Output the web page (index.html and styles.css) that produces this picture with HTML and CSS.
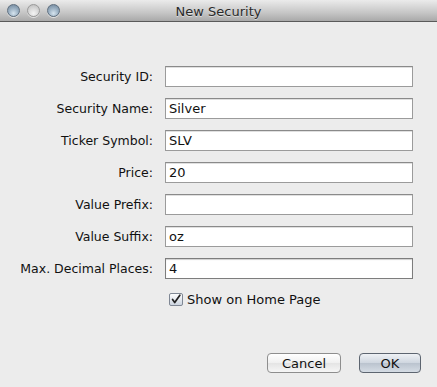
FILE: index.html
```html
<!DOCTYPE html>
<html lang="en">
<head>
    <meta charset="UTF-8">
    <title>New Security</title>
    <link rel="stylesheet" href="styles.css">
</head>
<body>

<div class="window">
    <div class="titlebar">
        <div class="lights">
            <span class="light"></span>
            <span class="light off"></span>
            <span class="light"></span>
        </div>
        <div class="title">New Security</div>
    </div>

    <div class="content">
        <div class="form">
            <label class="label">Security ID:</label>
            <div class="field"></div>
            <label class="label">Security Name:</label>
            <div class="field">Silver</div>
            <label class="label">Ticker Symbol:</label>
            <div class="field">SLV</div>
            <label class="label">Price:</label>
            <div class="field">20</div>
            <label class="label">Value Prefix:</label>
            <div class="field"></div>
            <label class="label">Value Suffix:</label>
            <div class="field">oz</div>
            <label class="label">Max. Decimal Places:</label>
            <div class="field focus">4</div>
        </div>

        <div class="check-row">
            <span class="checkbox">
                <svg width="14" height="13" viewBox="0 0 14 13">
                    <path d="M3 6.5 L5.5 10 L11.5 1.5" fill="none" stroke="#222" stroke-width="2" stroke-linecap="round" stroke-linejoin="round"/>
                </svg>
            </span>
            <span>Show on Home Page</span>
        </div>

        <div class="buttons">
            <button class="btn">Cancel</button>
            <button class="btn default">OK</button>
        </div>
    </div>
</div>

</body>
</html>
```

FILE: styles.css
```css
body {
    margin: 0;
    background-color: #ececec;
    font-family: "DejaVu Sans", "Liberation Sans", sans-serif;
    font-size: 12.5px;
    color: #111;
}

.window {
    width: 437px;
    height: 387px;
    display: flex;
    flex-direction: column;
    background-color: #ececec;
}

.titlebar {
    height: 21px;
    position: relative;
    background: linear-gradient(#ebebeb, #c6c6c6 60%, #a9a9a9);
    border-bottom: 1px solid #5a5a5a;
    display: flex;
    align-items: center;
    justify-content: center;
}

.lights {
    position: absolute;
    left: 7px;
    top: 4px;
    display: flex;
    gap: 7px;
}

.light {
    width: 13px;
    height: 13px;
    border-radius: 50%;
    box-sizing: border-box;
    border: 1px solid #5f6f7f;
    background: radial-gradient(circle at 50% 75%, #d6e4ee 0%, #9fb4c6 45%, #6c8298 100%);
    box-shadow: 0 1px 0 rgba(255, 255, 255, 0.6);
}

.light.off {
    border-color: #9a9a9a;
    background: radial-gradient(circle at 50% 75%, #f4f4f4 0%, #d8d8d8 50%, #b8b8b8 100%);
}

.title {
    font-size: 13px;
    color: #2a2a2a;
    padding-top: 1px;
    text-shadow: 0 1px 0 rgba(255, 255, 255, 0.5);
}

.content {
    flex: 1;
    display: flex;
    flex-direction: column;
}

.form {
    display: grid;
    grid-template-columns: 153px 248px;
    column-gap: 12px;
    row-gap: 11px;
    margin-top: 44px;
    align-items: center;
}

.label {
    text-align: right;
}

.field {
    height: 21px;
    box-sizing: border-box;
    border: 1px solid #9b9b9b;
    border-top-color: #8a8a8a;
    background-color: #fff;
    box-shadow: inset 0 1px 0 #e0e0e0;
    padding: 2px 3px 0;
    line-height: 16px;
    font-size: 13px;
}

.field.focus {
    border-color: #7d7d7d;
    box-shadow: inset 0 1px 1px #cfcfcf;
}

.check-row {
    display: flex;
    align-items: center;
    gap: 4px;
    margin: 13px 0 0 169px;
    font-size: 13px;
}

.checkbox {
    width: 14px;
    height: 13px;
    box-sizing: border-box;
    border: 1px solid #7f8794;
    border-radius: 2px;
    background: linear-gradient(#fdfdfd, #cdd5e0);
    display: flex;
    align-items: center;
    justify-content: center;
}

.buttons {
    display: flex;
    justify-content: flex-end;
    gap: 18px;
    margin-top: auto;
    margin-bottom: 14px;
    padding-right: 16px;
}

.btn {
    height: 20px;
    box-sizing: border-box;
    border: 1px solid #8e8e8e;
    border-radius: 4px;
    background: linear-gradient(#ffffff, #f0f0f0 50%, #e4e4e4 51%, #f6f6f6);
    font-family: "DejaVu Sans", "Liberation Sans", sans-serif;
    font-size: 13px;
    color: #111;
    padding: 0;
    width: 74px;
}

.btn.default {
    width: 62px;
    border-color: #5d6570;
    background: linear-gradient(#eef1f5, #cfd6df 50%, #bac3ce 51%, #d5dce4);
}
```
